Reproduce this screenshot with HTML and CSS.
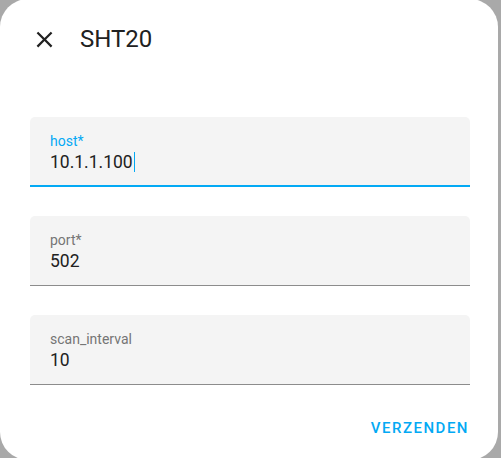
FILE: index.html
```html
<!DOCTYPE html>
<html>
<head>
<meta charset="utf-8">
<link rel="stylesheet" href="styles.css">
</head>
<body>
<div class="dialog">
  <div class="header">
    <svg class="close" viewBox="0 0 24 24" width="27" height="27"><path d="M19,6.41L17.59,5L12,10.59L6.41,5L5,6.41L10.59,12L5,17.59L6.41,19L12,13.41L17.59,19L19,17.59L13.41,12L19,6.41Z" fill="#212121"/></svg>
    <h2 class="title">SHT20</h2>
  </div>
  <div class="fields">
    <div class="field focused">
      <div class="label">host*</div>
      <div class="value">10.1.1.100<span class="caret"></span></div>
    </div>
    <div class="field">
      <div class="label">port*</div>
      <div class="value">502</div>
    </div>
    <div class="field">
      <div class="label">scan_interval</div>
      <div class="value">10</div>
    </div>
  </div>
  <div class="footer">
    <span class="button">VERZENDEN</span>
  </div>
</div>
</body>
</html>
```
FILE: styles.css
```css
html, body {
  margin: 0;
  padding: 0;
  height: 100%;
  overflow: hidden;
}
body {
  background: #a9a9a9;
  font-family: Roboto, "Noto Sans", sans-serif;
}
.dialog {
  width: 498px;
  height: 461px;
  margin-top: -1px;
  background: #fff;
  border-radius: 28px;
  box-sizing: border-box;
  padding-top: 26px;
}
.header {
  display: flex;
  align-items: center;
  height: 28px;
  padding-left: 31px;
}
.close {
  display: block;
  flex: none;
}
.title {
  margin: 0 0 0 22px;
  font-size: 24px;
  font-weight: 400;
  line-height: 28px;
  color: #212121;
}
.fields {
  display: flex;
  flex-direction: column;
  gap: 29px;
  margin: 64px 0 0 30px;
  width: 440px;
}
.field {
  height: 70px;
  box-sizing: border-box;
  background: #f4f4f4;
  border-radius: 5px 5px 0 0;
  border-bottom: 1px solid #8c8c8c;
  padding: 16px 20px 0;
}
.field.focused {
  border-bottom: 2px solid #03a9f4;
}
.label {
  font-size: 14px;
  line-height: 16px;
  color: #757575;
}
.focused .label {
  color: #03a9f4;
}
.value {
  margin-top: 3px;
  font-size: 17.5px;
  line-height: 21px;
  color: #212121;
}
.caret {
  display: inline-block;
  width: 1px;
  height: 20px;
  background: #03a9f4;
  vertical-align: -4px;
  margin-left: 1px;
}
.footer {
  display: flex;
  justify-content: flex-end;
  margin-top: 34px;
  padding-right: 29px;
}
.button {
  font-size: 15px;
  font-weight: 500;
  line-height: 18px;
  letter-spacing: 1.5px;
  color: #03a9f4;
}
```
